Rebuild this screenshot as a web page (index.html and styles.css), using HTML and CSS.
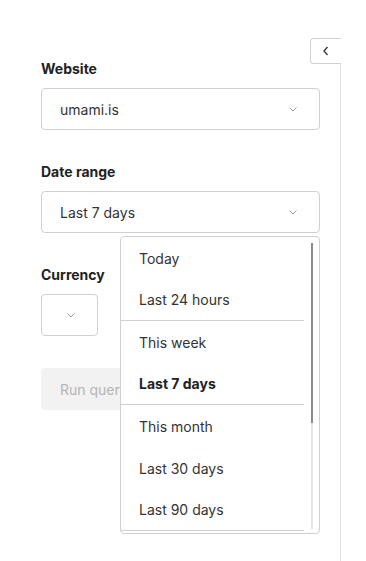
FILE: index.html
```html
<!DOCTYPE html>
<html lang="en">
<head>
    <meta charset="UTF-8">
    <meta name="viewport" content="width=device-width, initial-scale=1.0">
    <title>Revenue report</title>
    <link rel="stylesheet" href="styles.css">
</head>
<body>
    <div class="layout">
        <div class="params">
            <form class="param-form">
                <div class="field">
                    <div class="label">Website</div>
                    <div class="select">
                        <span class="select-value">umami.is</span>
                        <svg class="chevron" width="8" height="5" viewBox="0 0 8 5"><path d="M0.5 0.5 L4 4 L7.5 0.5" fill="none" stroke="#9a9a9a" stroke-width="1"/></svg>
                    </div>
                </div>

                <div class="field field-date">
                    <div class="label">Date range</div>
                    <div class="select">
                        <span class="select-value">Last 7 days</span>
                        <svg class="chevron" width="8" height="5" viewBox="0 0 8 5"><path d="M0.5 0.5 L4 4 L7.5 0.5" fill="none" stroke="#9a9a9a" stroke-width="1"/></svg>
                    </div>

                    <div class="menu">
                        <ul class="menu-list">
                            <li class="menu-item">Today</li>
                            <li class="menu-item group-end">Last 24 hours</li>
                            <li class="menu-item">This week</li>
                            <li class="menu-item group-end selected">Last 7 days</li>
                            <li class="menu-item">This month</li>
                            <li class="menu-item">Last 30 days</li>
                            <li class="menu-item group-end">Last 90 days</li>
                        </ul>
                        <div class="menu-scroll">
                            <div class="scroll-track">
                                <div class="scroll-thumb"></div>
                            </div>
                        </div>
                    </div>
                </div>

                <div class="field">
                    <div class="label">Currency</div>
                    <div class="select select-small">
                        <span class="select-value"></span>
                        <svg class="chevron" width="8" height="5" viewBox="0 0 8 5"><path d="M0.5 0.5 L4 4 L7.5 0.5" fill="none" stroke="#9a9a9a" stroke-width="1"/></svg>
                    </div>
                </div>

                <button type="submit" class="run-btn" disabled>Run query</button>
            </form>
        </div>

        <div class="results">
            <button type="button" class="collapse-btn">
                <svg width="8" height="10" viewBox="0 0 8 10"><path d="M5.5 1 L2 5 L5.5 9" fill="none" stroke="#333" stroke-width="1.3"/></svg>
            </button>
        </div>
    </div>
</body>
</html>
```

FILE: styles.css
```css
body {
    margin: 0;
    font-family: Inter, "Noto Sans", sans-serif;
    font-size: 14px;
    color: #333;
    background: #fff;
}

.layout {
    display: flex;
    min-height: 561px;
}

.params {
    width: 340px;
    box-sizing: border-box;
    padding: 59px 20px 0 41px;
}

.param-form {
    display: flex;
    flex-direction: column;
    gap: 32px;
}

.field {
    display: flex;
    flex-direction: column;
    gap: 9px;
}

.field-date {
    position: relative;
}

.label {
    font-weight: 700;
    line-height: 20px;
    color: #222;
}

.select {
    display: flex;
    align-items: center;
    justify-content: space-between;
    height: 42px;
    box-sizing: border-box;
    padding: 0 22px 0 18px;
    border: 1px solid #d0d0d0;
    border-radius: 4px;
    background: #fff;
}

.select-small {
    width: 57px;
}

.chevron {
    display: block;
    flex-shrink: 0;
}

.run-btn {
    align-self: flex-start;
    height: 42px;
    padding: 0 19px;
    border: none;
    border-radius: 4px;
    background: #f2f2f2;
    color: #b5b5b5;
    font-family: inherit;
    font-size: 14px;
}

/* dropdown of date range */
.menu {
    position: absolute;
    top: calc(100% + 3px);
    right: 0;
    width: 200px;
    height: 298px;
    box-sizing: border-box;
    display: flex;
    border: 1px solid #d0d0d0;
    border-radius: 4px;
    background: #fff;
    overflow: hidden;
}

.menu-list {
    flex: 1;
    margin: 0;
    padding: 0;
    list-style: none;
    overflow: hidden;
}

.menu-item {
    height: 42px;
    box-sizing: border-box;
    display: flex;
    align-items: center;
    padding-left: 18px;
    color: #333;
    white-space: nowrap;
}

.menu-item.group-end {
    border-bottom: 1px solid #d0d0d0;
}

.menu-item.selected {
    font-weight: 700;
    color: #222;
}

.menu-scroll {
    width: 15px;
    padding: 6px 0 4px 7px;
    box-sizing: border-box;
}

.scroll-track {
    width: 2px;
    height: 100%;
    background: #e4e4e4;
}

.scroll-thumb {
    height: 180px;
    background: #8c8c8c;
}

.results {
    flex: 1;
    margin-top: 38px;
    border-left: 1px solid #e2e2e2;
    position: relative;
}

.collapse-btn {
    position: absolute;
    top: 0;
    left: -31px;
    width: 31px;
    height: 26px;
    padding: 0;
    display: flex;
    align-items: center;
    justify-content: center;
    border: 1px solid #d0d0d0;
    border-right: none;
    border-radius: 4px 0 0 4px;
    background: #fff;
}
```
